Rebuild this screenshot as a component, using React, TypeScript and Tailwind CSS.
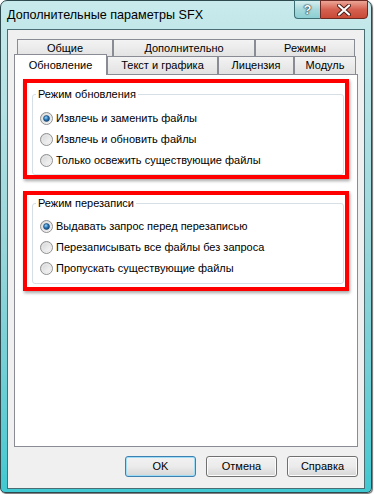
import React from "react";

function Radio({ checked }: { checked?: boolean }) {
  return (
    <svg width="13" height="13" viewBox="0 0 13 13" className="shrink-0">
      <defs>
        <linearGradient id="rg" x1="0" y1="0" x2="1" y2="1">
          <stop offset="0" stopColor="#cfd0d0" />
          <stop offset="1" stopColor="#ffffff" />
        </linearGradient>
        <radialGradient id="dot" cx="0.4" cy="0.35" r="0.7">
          <stop offset="0" stopColor="#9fd7f7" />
          <stop offset="0.5" stopColor="#2a79b9" />
          <stop offset="1" stopColor="#0f3e6e" />
        </radialGradient>
      </defs>
      <circle cx="6.5" cy="6.5" r="6" fill="url(#rg)" stroke="#8e8f8f" strokeWidth="1" />
      <circle cx="6.5" cy="6.5" r="4.3" fill="none" stroke="#e8e8e8" strokeWidth="1" />
      {checked && <circle cx="6.5" cy="6.5" r="3" fill="url(#dot)" stroke="#19426e" strokeWidth="0.6" />}
    </svg>
  );
}

function Group({ title, items, mt, pt }: { title: string; items: string[]; mt: string; pt: string }) {
  return (
    <fieldset className={`${mt} ${pt} ml-[5px] w-[312px] h-[88px] border border-[#d5dfe5] rounded-[3px] px-[7px]`}>
      <legend className="ml-[-4px] px-[2px] text-[11px] leading-[15px]">{title}</legend>
      {items.map((t, i) => (
        <div key={t} className="h-[21px] flex items-center gap-[3px]">
          <Radio checked={i === 0} />
          <span className="text-[11px] leading-[15px]">{t}</span>
        </div>
      ))}
    </fieldset>
  );
}

function Tab({ w, label, selected }: { w: string; label: string; selected?: boolean }) {
  if (selected) {
    return (
      <div className={`${w} h-[21px] -mb-px relative bg-white border border-b-0 border-[#898c95] flex items-center justify-center text-[11px]`}>
        {label}
      </div>
    );
  }
  return (
    <div className={`${w} h-[18px] bg-gradient-to-b from-[#f3f3f3] to-[#e2e2e2] border border-b-0 border-[#898c95] flex items-center justify-center text-[11px]`}>
      {label}
    </div>
  );
}

function Btn({ label, def }: { label: string; def?: boolean }) {
  return (
    <div
      className={`w-[71px] h-[21px] rounded-[3px] border ${
        def ? "border-[#3c7fb1] shadow-[inset_0_0_0_1px_#9fdcf6]" : "border-[#707070] shadow-[inset_0_0_0_1px_#fcfcfc]"
      } bg-gradient-to-b from-[#f2f2f2] via-[#ebebeb] to-[#d6d6d6] flex items-center justify-center text-[11px]`}
    >
      {label}
    </div>
  );
}

export default function App() {
  return (
    <div className="w-[374px] h-[494px] bg-white font-['Liberation_Sans',Arial,sans-serif] text-black">
      <div className="w-[372px] h-[493px] rounded-t-[7px] rounded-b-[5px] border border-[#2f4a4e] bg-gradient-to-b from-[#c8eaec] via-[#98d6da] to-[#3fc8d1] shadow-[1px_1px_1px_rgba(0,0,0,0.55)] flex flex-col">
        <div className="h-[28px] flex items-start">
          <div className="flex-1 pl-[6px] pt-[7px] text-[12.6px] leading-[15px]">Дополнительные параметры SFX</div>
          <div className="flex mr-[3px] -mt-px">
            <div className="w-[26px] h-[19px] rounded-bl-[4px] border border-[#3d6e74] border-r-0 bg-gradient-to-b from-[#d7eff0] via-[#a6d9dc] to-[#8ccfd3] flex items-center justify-center text-[13px] font-bold text-white [text-shadow:0_0_1px_#1b3a3e,0_0_1px_#1b3a3e,0_0_2px_#1b3a3e]">
              ?
            </div>
            <div className="w-[48px] h-[19px] rounded-br-[4px] border border-[#6e2a22] bg-gradient-to-b from-[#eba597] via-[#d5604f] to-[#c84a36] flex items-center justify-center">
              <svg width="14" height="12" viewBox="0 0 14 12">
                <path d="M2 1.5 L12 10.5 M12 1.5 L2 10.5" stroke="#4a1a14" strokeWidth="4" strokeLinecap="round" />
                <path d="M2 1.5 L12 10.5 M12 1.5 L2 10.5" stroke="#ffffff" strokeWidth="2.2" strokeLinecap="round" />
              </svg>
            </div>
          </div>
        </div>
        <div className="mx-[6px] h-[460px] border border-[#4a6d73] bg-[#f0f0f0] flex flex-col">
          <div className="ml-[6px] mt-[9px] w-[344px] flex flex-col">
            <div className="flex pl-[3px]">
              <Tab w="w-[96px]" label="Общие" />
              <Tab w="w-[142px]" label="Дополнительно" />
              <Tab w="w-[100px]" label="Режимы" />
            </div>
            <div className="flex items-end -mt-[3px]">
              <Tab w="w-[93px]" label="Обновление" selected />
              <Tab w="w-[111px]" label="Текст и графика" />
              <Tab w="w-[76px]" label="Лицензия" />
              <Tab w="w-[62px]" label="Модуль" />
            </div>
            <div className="h-[373px] border border-[#898c95] bg-white pt-[4px] px-[8px]">
              <div className="w-[326px] h-[100px] border-[4px] border-[#ff0000] bg-white shadow-[1px_2px_3px_rgba(0,0,0,0.35)]">
                <Group
                  mt="mt-[4px]"
                  pt="pt-[6px]"
                  title="Режим обновления"
                  items={["Извлечь и заменить файлы", "Извлечь и обновить файлы", "Только освежить существующие файлы"]}
                />
              </div>
              <div className="mt-[12px] w-[326px] h-[100px] border-[4px] border-[#ff0000] bg-white shadow-[1px_2px_3px_rgba(0,0,0,0.35)]">
                <Group
                  mt="mt-[1px]"
                  pt="pt-[5px]"
                  title="Режим перезаписи"
                  items={["Выдавать запрос перед перезаписью", "Перезаписывать все файлы без запроса", "Пропускать существующие файлы"]}
                />
              </div>
            </div>
          </div>
          <div className="mt-[9px] pr-[6px] flex justify-end gap-[10px]">
            <Btn label="OK" def />
            <Btn label="Отмена" />
            <Btn label="Справка" />
          </div>
        </div>
      </div>
    </div>
  );
}
